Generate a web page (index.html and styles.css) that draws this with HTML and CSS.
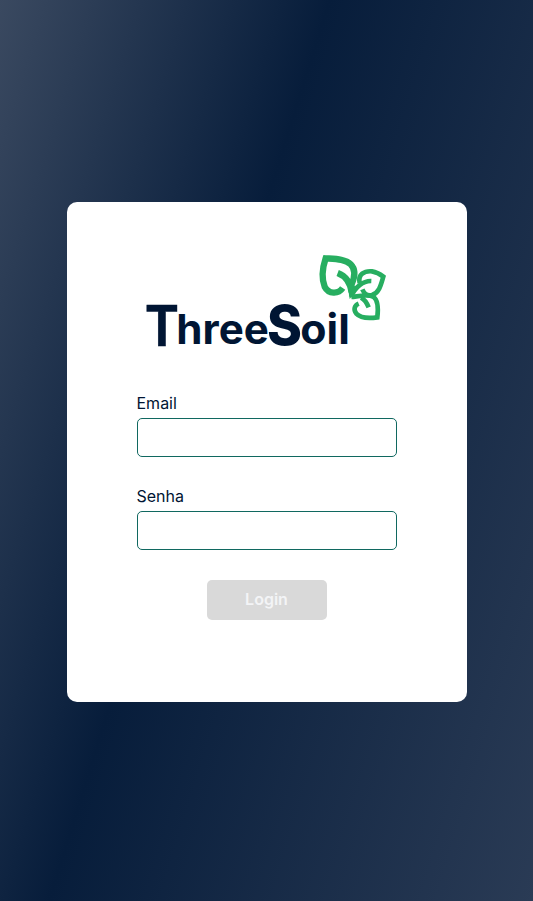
FILE: index.html
```html
<!DOCTYPE html>
<html lang="pt-BR">
<head>
<meta charset="utf-8">
<meta name="viewport" content="width=device-width, initial-scale=1">
<title>ThreeSoil</title>
<link rel="stylesheet" href="styles.css">
</head>
<body>
<main class="page">
  <form class="card">
    <svg class="logo" viewBox="0 0 240 96" role="img" aria-label="ThreeSoil">
      <g class="wordmark">
        <text class="initial" x="-.7" y="92.5" font-size="59" textLength="31.3" lengthAdjust="spacingAndGlyphs">T</text>
        <text x="29.3" y="91.2" font-size="41" textLength="92.5" lengthAdjust="spacingAndGlyphs">hree</text>
        <text class="cap" x="120" y="92" font-size="54.5" textLength="35" lengthAdjust="spacingAndGlyphs">S</text>
        <text x="153.3" y="91.2" font-size="41" textLength="49.5" lengthAdjust="spacingAndGlyphs">oil</text>
      </g>
      <g class="leaves" transform="translate(163 -8) scale(.33333)">
        <path class="thick" d="M98 129C85 148 56 148 44 125C34 99 39 64 47 40C77 42 106 42 122 58C137 73 136 93 125 117"/>
        <path class="thick" d="M83 84C104 92 121 112 125 142"/>
        <path class="solid" d="M112 116L131 112L139 137L119 162Z"/>
        <path d="M149 114C143 88 163 77 186 79C200 81 211 88 220 95C213 119 208 143 186 150C172 154 162 145 157 133"/>
        <path d="M184 108C160 107 135 126 123 156"/>
        <path d="M124 156C145 154 174 146 191 156C207 168 204 200 202 217C181 220 153 221 139 206C129 193 134 181 146 176"/>
        <path d="M153 158C165 164 171 175 176 187"/>
      </g>
    </svg>
    <label class="field">Email<input class="input" type="email"></label>
    <label class="field">Senha<input class="input" type="password"></label>
    <button class="submit" type="submit" disabled>Login</button>
  </form>
</main>
</body>
</html>
```
FILE: styles.css
```css
* { box-sizing: border-box; }
body {
  margin: 0;
  font-family: Inter, Roboto, sans-serif;
  color: #001533;
}
.page {
  display: flex;
  justify-content: center;
  height: 901px;
  padding-top: 202px;
  background: linear-gradient(107.3deg, #3a4960 0%, #071d3b 40.5%, #2a3b55 100%);
}
.card {
  display: flex;
  flex-direction: column;
  align-items: center;
  width: 400px;
  height: 500px;
  padding-top: 51px;
  border-radius: 10px;
  background: #fff;
}
.logo {
  flex: none;
  width: 240px;
  height: 96px;
  margin-bottom: 45px;
  overflow: visible;
}
.wordmark { fill: #001533; font-weight: 700; }
.initial { font-family: "Liberation Sans", Arial, sans-serif; stroke: #001533; stroke-width: .5; }
.cap { font-weight: 800; }
.leaves { fill: none; stroke: #27ae60; stroke-width: 14; }
.thick { stroke-width: 19; }
.solid { fill: #27ae60; stroke: none; }
.field {
  display: flex;
  flex-direction: column;
  gap: 5px;
  width: 260px;
  margin-bottom: 30px;
  font-size: 16px;
  line-height: 19px;
}
.input {
  height: 39px;
  padding: 0 10px;
  border: 1px solid #106860;
  border-radius: 5px;
  background: #fff;
}
.submit {
  width: 120px;
  height: 40px;
  padding: 0 0 2px;
  border: 0;
  border-radius: 5px;
  background: #d9d9d9;
  color: #f3f4f6;
  font: 600 16px Inter, Roboto, sans-serif;
}
```
